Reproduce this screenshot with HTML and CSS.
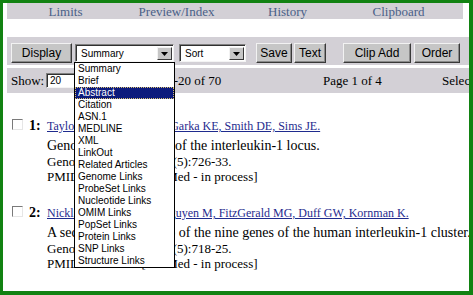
FILE: index.html
```html
<!DOCTYPE html>
<html lang="en">

<head>
  <meta charset="UTF-8">
  <title>PubMed Results</title>
  <link rel="stylesheet" href="styles.css">
</head>

<body>
  <div class="frame">
    <div class="nav">
      <a href="#">Limits</a>
      <a href="#">Preview/Index</a>
      <a href="#">History</a>
      <a href="#">Clipboard</a>
    </div>

    <div class="toolbar">
      <button class="btn btn-display">Display</button>
      <div class="select select-format">
        <span>Summary</span>
        <span class="arrow"><svg width="7" height="4" viewBox="0 0 7 4"><polygon points="0,0 7,0 3.5,4" fill="#000"/></svg></span>
      </div>
      <div class="select select-sort">
        <span>Sort</span>
        <span class="arrow"><svg width="7" height="4" viewBox="0 0 7 4"><polygon points="0,0 7,0 3.5,4" fill="#000"/></svg></span>
      </div>
      <button class="btn btn-save">Save</button>
      <button class="btn btn-text">Text</button>
      <button class="btn btn-clip">Clip Add</button>
      <button class="btn btn-order">Order</button>
    </div>

    <div class="showbar">
      <span class="show-label">Show:</span>
      <span class="show-input">20</span>
      <span class="count">Items 1-20 of 70</span>
      <span class="pages">Page 1 of 4</span>
      <span class="select-page">Select page</span>
    </div>

    <div class="results">
      <div class="result">
        <div class="mark"><span class="check"></span><span class="num">1:</span></div>
        <div class="entry">
          <a class="authors" href="#">Taylor SL, Renshaw BR, Garka KE, Smith DE, Sims JE.</a>
          <div class="title">Genomic organization of the interleukin-1 locus.</div>
          <div class="source">Genomics 2002 May;79(5):726-33.</div>
          <div class="source">PMID: 12036286 [PubMed - in process]</div>
        </div>
      </div>
      <div class="result">
        <div class="mark"><span class="check"></span><span class="num">2:</span></div>
        <div class="entry">
          <a class="authors" href="#">Nicklin MJ, Barton JL, Nguyen M, FitzGerald MG, Duff GW, Kornman K.</a>
          <div class="title">A sequence-based map of the nine genes of the human interleukin-1 cluster.</div>
          <div class="source">Genomics 2002 May;79(5):718-25.</div>
          <div class="source">PMID: 12036285 [PubMed - in process]</div>
        </div>
      </div>
    </div>

    <ul class="dropdown">
      <li>Summary</li>
      <li>Brief</li>
      <li class="active">Abstract</li>
      <li>Citation</li>
      <li>ASN.1</li>
      <li>MEDLINE</li>
      <li>XML</li>
      <li>LinkOut</li>
      <li>Related Articles</li>
      <li>Genome Links</li>
      <li>ProbeSet Links</li>
      <li>Nucleotide Links</li>
      <li>OMIM Links</li>
      <li>PopSet Links</li>
      <li>Protein Links</li>
      <li>SNP Links</li>
      <li>Structure Links</li>
    </ul>
  </div>
</body>

</html>
```

FILE: styles.css
```css
* {
  margin: 0;
  padding: 0;
  box-sizing: border-box;
}

body {
  font-family: 'Liberation Serif', serif;
  background: #fff;
  color: #000;
}

.frame {
  position: relative;
  width: 473px;
  height: 295px;
  border: 3px solid #128212;
  border-right-width: 4px;
  border-bottom-width: 4px;
  padding-left: 4px;
  overflow: hidden;
}

/* top navigation */
.nav {
  display: grid;
  grid-template-columns: repeat(4, 111px);
  height: 16px;
  padding-left: 3px;
  margin-right: 6px;
  margin-bottom: 18px;
  background: #d3d0d6;
}

.nav a {
  text-align: center;
  font-size: 13px;
  line-height: 17px;
  color: #4a6088;
  text-decoration: none;
}

/* display toolbar */
.toolbar {
  display: flex;
  align-items: center;
  height: 28px;
  padding: 4px 0 0 4px;
  background: #d3d0d6;
}

.btn {
  flex-shrink: 0;
  height: 20px;
  font-family: 'Liberation Sans', sans-serif;
  font-size: 12px;
  color: #000;
  background: #c6c6c6;
  border: 1px solid;
  border-color: #f2f2f2 #383838 #383838 #f2f2f2;
  box-shadow: inset -1px -1px #8a8a8a;
}

.btn-display {
  width: 61px;
}

.btn-save {
  width: 36px;
  margin-left: 10px;
}

.btn-text {
  width: 32px;
  margin-left: 2px;
}

.btn-clip {
  width: 68px;
  margin-left: 17px;
}

.btn-order {
  width: 46px;
  margin-left: 3px;
}

.select {
  display: flex;
  flex-shrink: 0;
  align-items: center;
  justify-content: space-between;
  height: 18px;
  padding: 0 1px 0 5px;
  background: #fff;
  border: 1px solid;
  border-color: #808080 #f4f4f4 #f4f4f4 #808080;
  box-shadow: inset 1px 1px #303030;
  font-family: 'Liberation Sans', sans-serif;
  font-size: 10px;
}

.select-format {
  width: 99px;
  margin-left: 3px;
}

.select-sort {
  width: 67px;
  margin-left: 5px;
}

.arrow {
  display: flex;
  align-items: center;
  justify-content: center;
  width: 15px;
  height: 13px;
  margin-top: 1px;
  background: #c6c6c6;
  border: 1px solid;
  border-color: #f2f2f2 #383838 #383838 #f2f2f2;
}

/* paging bar */
.showbar {
  display: flex;
  align-items: center;
  height: 25px;
  margin-top: 3px;
  padding-left: 4px;
  background: #d3d0d6;
  font-size: 13px;
  white-space: nowrap;
}

.showbar span {
  flex-shrink: 0;
}

.show-label {
  width: 35px;
}

.show-input {
  width: 40px;
  height: 15px;
  margin-right: 49px;
  padding-left: 3px;
  background: #fff;
  border: 1px solid;
  border-color: #808080 #f4f4f4 #f4f4f4 #808080;
  box-shadow: inset 1px 1px #303030;
  font-family: 'Liberation Sans', sans-serif;
  font-size: 10px;
  line-height: 13px;
}

.count {
  width: 188px;
}

.pages {
  width: 119px;
}

/* result list */
.results {
  padding: 25px 0 0 5px;
}

.result {
  display: flex;
  white-space: nowrap;
}

.result + .result {
  margin-top: 21px;
}

.mark {
  display: flex;
  flex-shrink: 0;
  align-items: flex-start;
  width: 35px;
}

.check {
  width: 11px;
  height: 11px;
  margin-top: 1px;
  background: #fff;
  border: 1px solid;
  border-color: #7a7a7a #e6e6e6 #e6e6e6 #7a7a7a;
}

.num {
  margin-left: 6px;
  font-size: 14px;
  font-weight: 700;
  line-height: 16px;
}

.authors {
  display: block;
  font-size: 12px;
  line-height: 16px;
  color: #1f2b8e;
}

.title {
  margin-top: 3px;
  font-size: 14px;
  line-height: 17px;
}

.source {
  font-size: 13px;
  line-height: 15px;
}

/* open format list */
.dropdown {
  position: absolute;
  left: 71px;
  top: 59px;
  width: 101px;
  list-style: none;
  background: #fff;
  border: 1px solid #000;
  font-family: 'Liberation Sans', sans-serif;
  font-size: 10px;
}

.dropdown li {
  height: 12px;
  line-height: 12px;
  padding-left: 3px;
}

.dropdown .active {
  background: #0c1a7c;
  color: #fff;
  outline: 1px dotted #d8c070;
  outline-offset: -1px;
}
```
